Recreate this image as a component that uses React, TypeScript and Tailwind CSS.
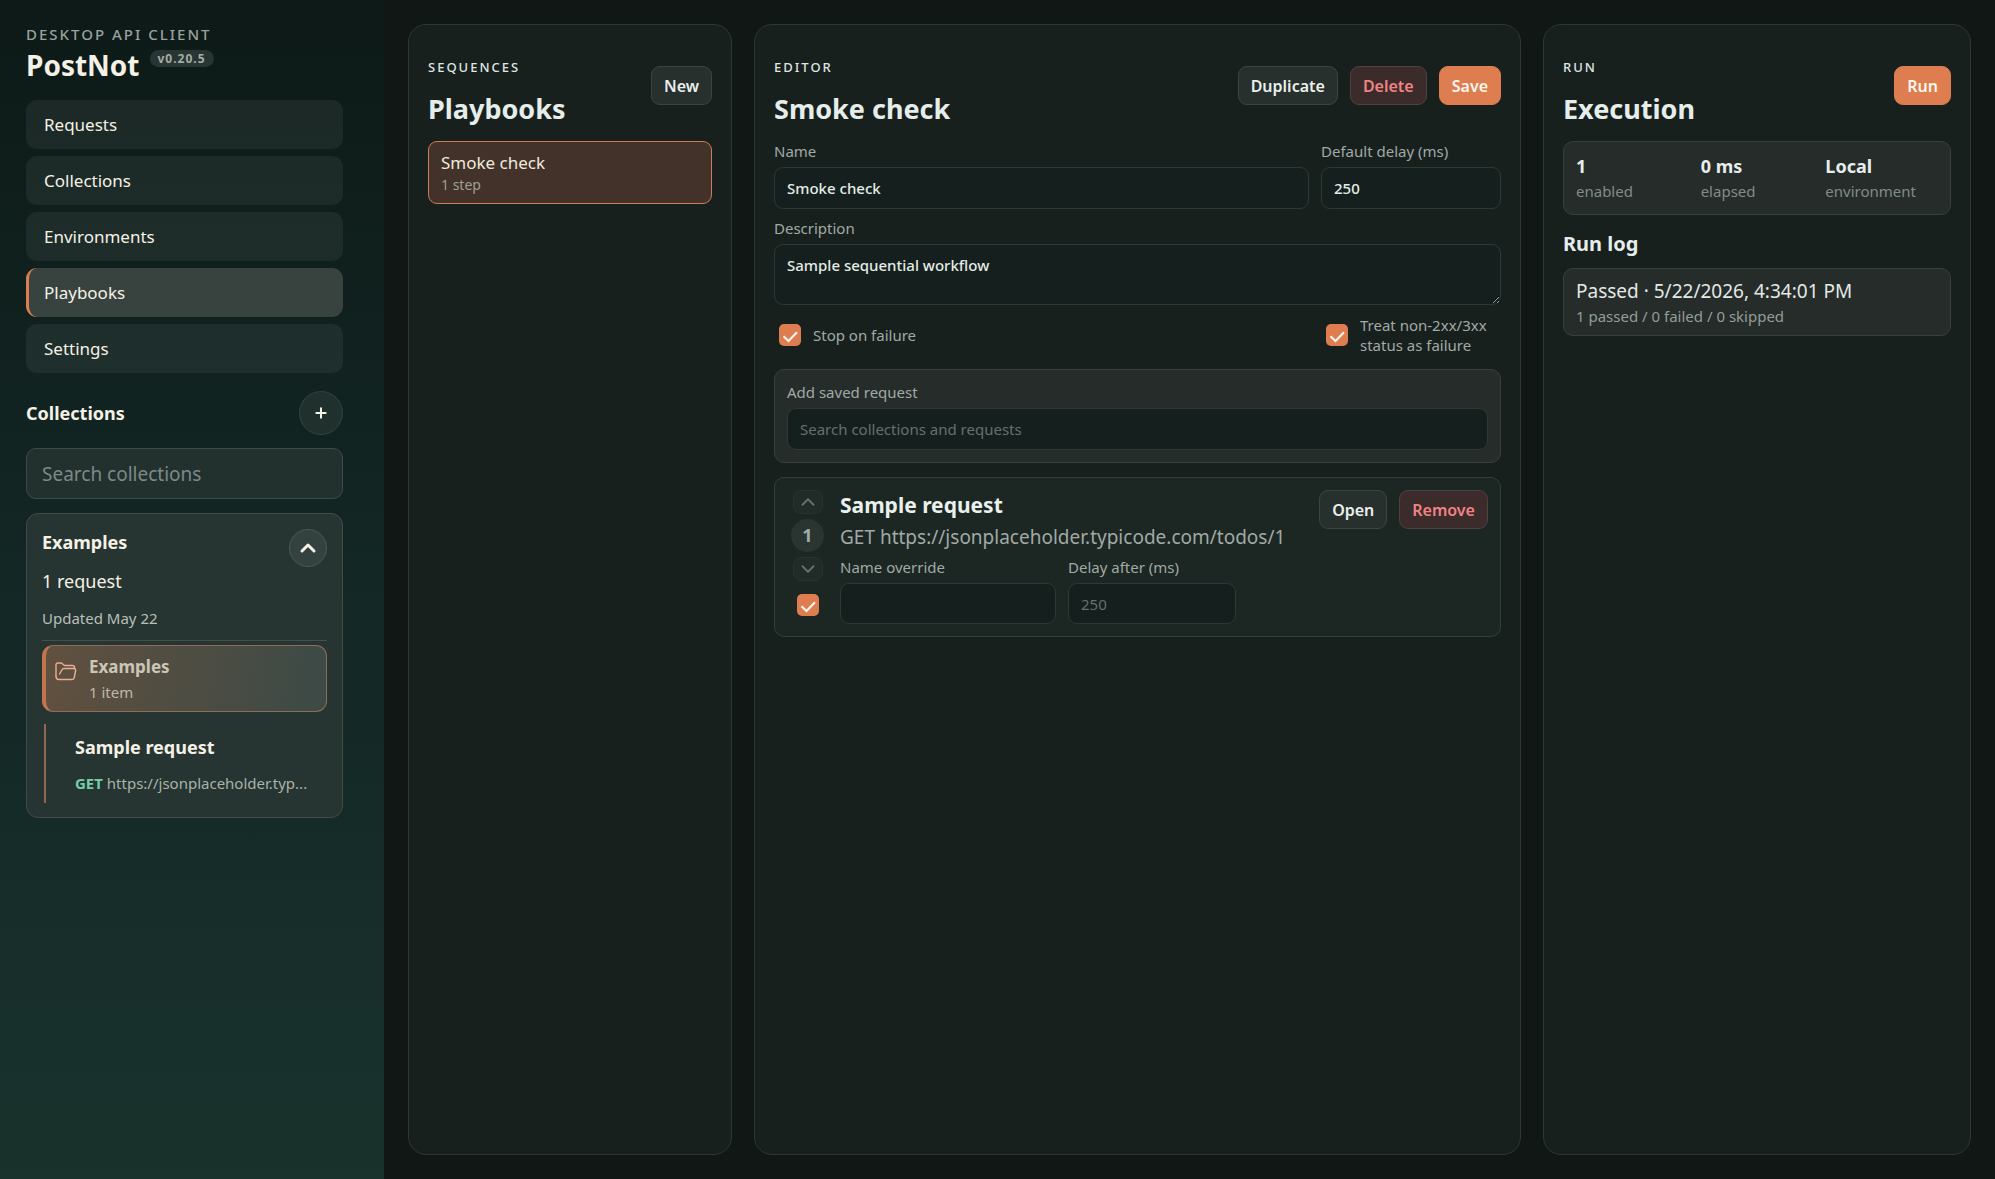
import { ChevronDown, ChevronUp, Plus } from "lucide-react";

const navItems = ["Requests", "Collections", "Environments", "Playbooks", "Settings"];

const stats = [
  { value: "1", label: "enabled" },
  { value: "0 ms", label: "elapsed" },
  { value: "Local", label: "environment" },
];

const variants = {
  plain: "border-[#3a4441] bg-[#28302e] text-[#e9efec]",
  danger: "border-[#50403f] bg-[#3b2b2a] text-[#f08383]",
  primary: "border-[#de7e50] bg-[#de7e50] text-[#fdf6ee]",
};

const inputClass =
  "w-full rounded-[9px] border border-[#2c3936] bg-[#15201e] px-3 text-[15px] font-medium text-[#e4ece8] outline-none placeholder:font-normal placeholder:text-[#65706d]";

// Long urls don't fit in the sidebar tree
function shorten(url: string, max = 27) {
  return url.length > max ? `${url.slice(0, max)}...` : url;
}

function Button({ children, variant = "plain" }: { children: React.ReactNode; variant?: keyof typeof variants }) {
  return (
    <button type="button" className={`h-[39px] rounded-[9px] border px-3 text-[16px] font-semibold ${variants[variant]}`}>
      {children}
    </button>
  );
}

function Checkbox({ id, label }: { id: string; label?: string }) {
  return (
    <span className="grid shrink-0 place-items-center">
      <input
        id={id}
        type="checkbox"
        defaultChecked
        aria-label={label}
        className="col-start-1 row-start-1 size-[22px] appearance-none rounded-[5px] bg-[#de7e50]"
      />
      <svg viewBox="0 0 22 22" className="pointer-events-none col-start-1 row-start-1 size-[22px]" fill="none" stroke="#fff8f0" strokeWidth="2">
        <path d="M4.5 12.2 L9.5 17 L18 8.2" />
      </svg>
    </span>
  );
}

function PanelHeader({ eyebrow, title, children }: { eyebrow: string; title: string; children: React.ReactNode }) {
  return (
    <header className="flex justify-between">
      <div>
        <p className="text-[13px] leading-5 font-medium tracking-[2px] text-[#dfe6e3]">{eyebrow}</p>
        <h2 className="mt-[13px] text-[27px] leading-[37px] font-bold text-[#e6eeeb]">{title}</h2>
      </div>
      <div className="flex items-start gap-3 pt-[9px]">{children}</div>
    </header>
  );
}

function Sidebar() {
  return (
    <aside className="w-96 shrink-0 bg-linear-to-b from-[#0d1a17] via-[#132725] to-[#19322c] pt-6 pr-[41px] pl-[26px] text-[#f5f1e6]">
      <p className="text-[15px] leading-5 font-medium tracking-[2px] text-[#9ba19c]">DESKTOP API CLIENT</p>
      <div className="flex items-start gap-[10px]">
        <h1 className="text-[28px] leading-[42px] font-bold">PostNot</h1>
        <span className="mt-[6px] rounded-full bg-[#283532] px-2 text-[12px] leading-[17px] font-bold tracking-[1px] text-[#a5aca7]">
          v0.20.5
        </span>
      </div>

      <nav className="mt-[14px] flex flex-col gap-[7px]">
        {navItems.map((item) => (
          <button
            key={item}
            type="button"
            className={`h-[49px] rounded-[11px] border-l-[3px] pl-[15px] text-left text-[17px] ${
              item === "Playbooks" ? "border-[#de7e50] bg-[#38433f]" : "border-transparent bg-white/6"
            }`}
          >
            {item}
          </button>
        ))}
      </nav>

      <div className="mt-[18px] flex items-center justify-between">
        <h2 className="text-[18px] font-bold">Collections</h2>
        <button type="button" aria-label="Add collection" className="grid size-11 place-items-center rounded-full border border-[#34423e] bg-[#20302c]">
          <Plus size={16} strokeWidth={3} />
        </button>
      </div>

      <input
        aria-label="Search collections"
        placeholder="Search collections"
        className="mt-[13px] h-[51px] w-full rounded-[10px] border border-[#3c4c48] bg-[#22312e] px-[15px] text-[19px] outline-none placeholder:text-[#7d8986]"
      />

      <section className="mt-[14px] rounded-xl border border-[#444b45] bg-[#263531] px-[15px] pt-[15px] pb-[14px]">
        <div className="flex items-start justify-between">
          <h3 className="text-[18px] leading-[26px] font-bold">Examples</h3>
          <button type="button" aria-label="Collapse Examples" className="grid size-[38px] place-items-center rounded-full border border-[#4a5955] bg-[#33423e]">
            <ChevronUp size={24} strokeWidth={3} />
          </button>
        </div>
        <p className="text-[18px] leading-7">1 request</p>
        <p className="mt-2 text-[15px] leading-[30px] text-[#babfb9]">Updated May 22</p>
        <hr className="mt-[7px] border-[#43504a]" />

        <button
          type="button"
          className="mt-1 flex h-[67px] w-full items-start gap-3 rounded-[11px] border border-l-4 border-[#8f6c58] border-l-[#c1754f] bg-linear-[100deg] from-[#61503f] to-[#3c4a46] pt-[9px] pl-[9px] text-left"
        >
          <svg viewBox="0 0 22 20" className="mt-[6px] h-5 w-[22px]" fill="none" stroke="#e9af91" strokeWidth="1.4" strokeLinecap="round" strokeLinejoin="round">
            <path d="M1 15.5 V4 Q1 2 3 2 H6.5 L9.5 4.5 H17.5 Q19.5 4.5 19.5 6.5 V7.5" />
            <path d="M1 15.5 Q1 18.5 4 18.5 H17 Q19 18.5 19.3 16.5 L20.6 9.5 Q20.8 7.5 19 7.5 H9 Q7.5 7.5 6.8 9 L4.6 13" />
          </svg>
          <span>
            <span className="block text-[17px] leading-6 font-bold text-[#cbc6b6]">Examples</span>
            <span className="block text-[15px] leading-[26px] text-[#bdb9a9]">1 item</span>
          </span>
        </button>

        <div className="mt-3 ml-[2px] h-[79px] border-l-2 border-[#8f6750] pt-2 pl-[29px]">
          <p className="text-[18px] leading-[30px] font-bold">Sample request</p>
          <p className="mt-[7px] text-[15px] leading-7 whitespace-nowrap text-[#a9b2ab]">
            <span className="font-bold text-[#74cfac]">GET</span> {shorten("https://jsonplaceholder.typicode.com/todos/1")}
          </p>
        </div>
      </section>
    </aside>
  );
}

function Editor() {
  return (
    <section className="min-w-0 flex-1 rounded-[18px] border border-[#2b3835] bg-[#18201e] px-[19px] pt-8">
      <PanelHeader eyebrow="EDITOR" title="Smoke check">
        <Button>Duplicate</Button>
        <Button variant="danger">Delete</Button>
        <Button variant="primary">Save</Button>
      </PanelHeader>

      <form className="mt-[14px] text-[15px] text-[#a0aaa6]">
        <div className="grid grid-cols-[1fr_180px] gap-3">
          <div>
            <label htmlFor="name" className="block leading-5">Name</label>
            <input id="name" defaultValue="Smoke check" className={`${inputClass} mt-[6px] h-[42px]`} />
          </div>
          <div>
            <label htmlFor="delay" className="block leading-5">Default delay (ms)</label>
            <input id="delay" defaultValue="250" className={`${inputClass} mt-[6px] h-[42px]`} />
          </div>
        </div>
        <label htmlFor="description" className="mt-[9px] block leading-5">Description</label>
        <textarea
          id="description"
          defaultValue="Sample sequential workflow"
          className={`${inputClass} mt-[6px] block h-[61px] resize-y py-[9px] leading-[22px]`}
        />

        <div className="mt-[10px] flex min-h-10 items-center justify-between leading-5">
          <div className="flex items-center gap-3 pl-[5px]">
            <Checkbox id="stop" />
            <label htmlFor="stop">Stop on failure</label>
          </div>
          <div className="flex w-[175px] items-center gap-3">
            <Checkbox id="treat" />
            <label htmlFor="treat">Treat non-2xx/3xx status as failure</label>
          </div>
        </div>

        <div className="mt-[14px] rounded-[10px] border border-[#36403d] bg-[#262c2a] px-3 pt-3 pb-3">
          <label htmlFor="add" className="block leading-5">Add saved request</label>
          <input id="add" placeholder="Search collections and requests" className={`${inputClass} mt-[6px] h-[42px]`} />
        </div>
      </form>

      <article className="mt-[14px] flex rounded-[10px] border border-[#2f4039] bg-[#1c2622] px-3 py-3 text-[#a0aaa6]">
        <div className="flex w-[41px] flex-col items-center">
          <button type="button" aria-label="Move up" className="grid h-6 w-[30px] place-items-center rounded-lg border border-[#28322f] bg-[#212b28] text-[#66716d]">
            <ChevronUp size={22} />
          </button>
          <span className="my-[5px] grid size-[33px] place-items-center rounded-full bg-[#2a3431] text-[18px] font-bold">1</span>
          <button type="button" aria-label="Move down" className="grid h-6 w-[30px] place-items-center rounded-lg border border-[#28322f] bg-[#212b28] text-[#66716d]">
            <ChevronDown size={22} />
          </button>
          <div className="mt-[13px]">
            <Checkbox id="step-enabled" label="Step enabled" />
          </div>
        </div>
        <div className="min-w-0 flex-1 pl-3">
          <div className="flex justify-between">
            <div>
              <h3 className="text-[21px] leading-[30px] font-bold text-[#e9f0ed]">Sample request</h3>
              <p className="mt-[2px] text-[19px] leading-[30px]">GET https://jsonplaceholder.typicode.com/todos/1</p>
            </div>
            <div className="flex items-start gap-3">
              <Button>Open</Button>
              <Button variant="danger">Remove</Button>
            </div>
          </div>
          <div className="mt-[5px] flex gap-3 text-[15px]">
            <div className="w-[216px]">
              <label htmlFor="override" className="block leading-5">Name override</label>
              <input id="override" className={`${inputClass} mt-[6px] h-[41px]`} />
            </div>
            <div className="w-[168px]">
              <label htmlFor="after" className="block leading-5">Delay after (ms)</label>
              <input id="after" placeholder="250" className={`${inputClass} mt-[6px] h-[41px]`} />
            </div>
          </div>
        </div>
      </article>
    </section>
  );
}

export default function App() {
  return (
    <div className="flex min-h-screen bg-[#111715] font-['Noto_Sans',sans-serif]">
      <Sidebar />
      <main className="flex min-w-0 flex-1 gap-[22px] p-6">
        <section className="w-[324px] shrink-0 rounded-[18px] border border-[#2b3835] bg-[#18201e] px-[19px] pt-8">
          <PanelHeader eyebrow="SEQUENCES" title="Playbooks">
            <Button>New</Button>
          </PanelHeader>
          <button type="button" className="mt-[14px] w-full rounded-[9px] border border-[#ca7d57] bg-[#423229] px-3 py-2 text-left">
            <span className="block text-[17px] leading-[25px] text-[#efe9dd]">Smoke check</span>
            <span className="block text-[14px] leading-5 text-[#9ea192]">1 step</span>
          </button>
        </section>

        <Editor />

        <section className="w-[428px] shrink-0 rounded-[18px] border border-[#2b3835] bg-[#18201e] px-[19px] pt-8">
          <PanelHeader eyebrow="RUN" title="Execution">
            <Button variant="primary">Run</Button>
          </PanelHeader>
          <dl className="mt-[14px] grid grid-cols-3 gap-3 rounded-[10px] border border-[#36403d] bg-[#262c2a] px-3 pt-3 pb-[10px]">
            {stats.map((stat) => (
              <div key={stat.label} className="flex flex-col-reverse">
                <dt className="text-[15px] leading-[25px] text-[#818c88]">{stat.label}</dt>
                <dd className="text-[18px] leading-[25px] font-bold text-[#e6eeeb]">{stat.value}</dd>
              </div>
            ))}
          </dl>
          <h3 className="mt-[15px] text-[20px] leading-7 font-bold text-[#e6eeeb]">Run log</h3>
          <div className="mt-[10px] rounded-[10px] border border-[#36403d] bg-[#262c2a] px-3 py-2">
            <p className="text-[19px] leading-7 text-[#e2e9e6]">Passed · 5/22/2026, 4:34:01 PM</p>
            <p className="text-[15px] leading-[22px] text-[#929d98]">1 passed / 0 failed / 0 skipped</p>
          </div>
        </section>
      </main>
    </div>
  );
}
